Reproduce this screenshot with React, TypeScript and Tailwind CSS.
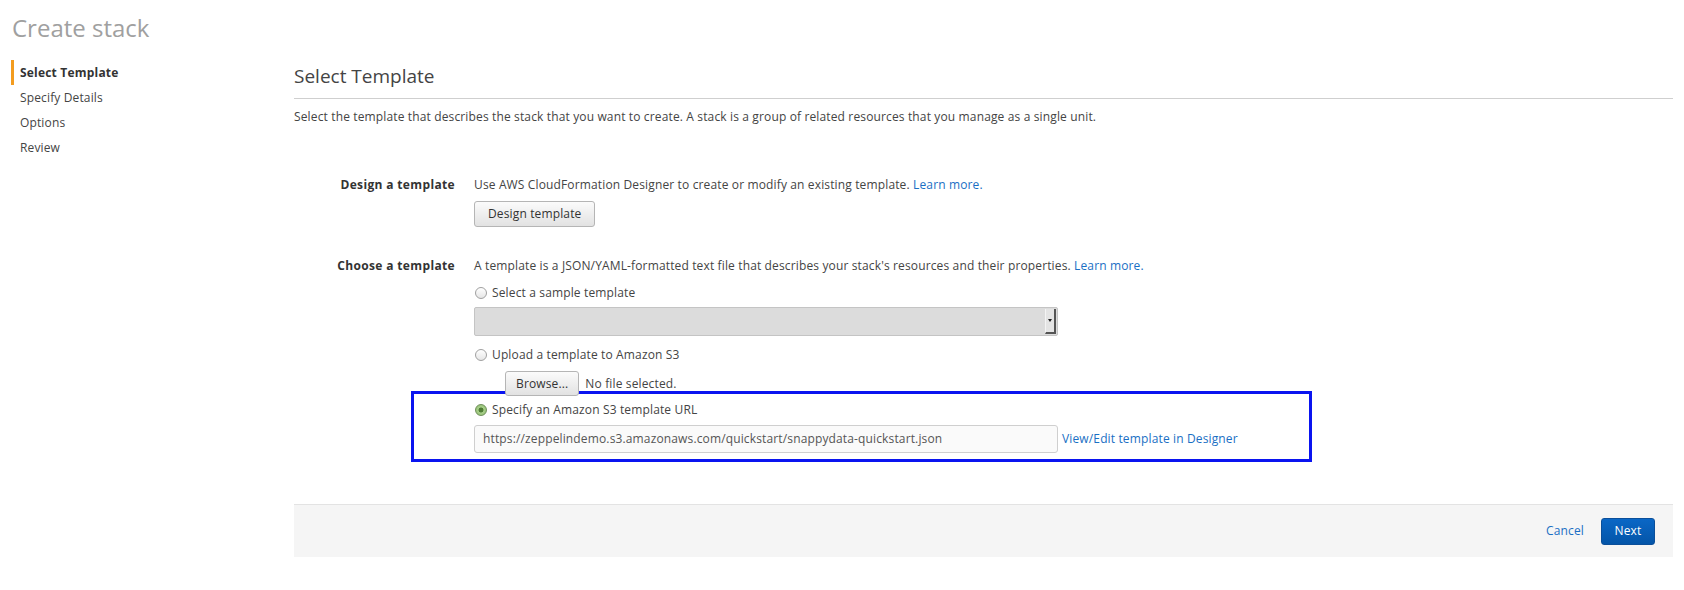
import React from "react";

function Radio({ checked }: { checked?: boolean }) {
  if (checked) {
    return (
      <span className="inline-flex items-center justify-center w-[12px] h-[12px] rounded-full border border-[#6f8f5a] bg-[radial-gradient(circle,#4f7d35_0%,#4f7d35_30%,#a8cf8a_40%,#8cbc6c_100%)]" />
    );
  }
  return (
    <span className="inline-block w-[12px] h-[12px] rounded-full border border-[#a0a0a0] bg-[linear-gradient(#ffffff,#e6e6e6)]" />
  );
}

export default function App() {
  return (
    <div className="w-[1684px] h-[590px] bg-white text-[#444] font-['Open_Sans',sans-serif] tracking-[0.14px] overflow-hidden">
      <h1 className="pl-[12px] pt-[12px] text-[24px] leading-[32px] tracking-normal text-[#a0a0a0] font-normal">
        Create stack
      </h1>
      <div className="flex mt-[16px]">
        <nav className="w-[294px] shrink-0 flex flex-col text-[12px] pl-[11px]">
          <div className="flex items-center h-[25px] border-l-[3px] border-[#f39c1f] pl-[6px] font-bold text-[#333] tracking-[0.2px]">
            Select Template
          </div>
          <div className="flex items-center h-[25px] pl-[9px]">Specify Details</div>
          <div className="flex items-center h-[25px] pl-[9px]">Options</div>
          <div className="flex items-center h-[25px] pl-[9px]">Review</div>
        </nav>
        <main className="flex-1 pr-[11px]">
          <h2 className="text-[19px] leading-[24px] tracking-normal text-[#444] font-normal mt-[4px] pb-[10px] border-b border-[#cfcfcf]">
            Select Template
          </h2>
          <p className="text-[12px] leading-[18px] mt-[9px]">
            Select the template that describes the stack that you want to create. A stack is a group of related resources that you manage as a single unit.
          </p>

          <div className="grid grid-cols-[161px_1fr] gap-x-[19px] mt-[50px] text-[12px]">
            <div className="text-right font-bold text-[#333] leading-[18px] tracking-[0.35px]">Design a template</div>
            <div className="flex flex-col items-start">
              <div className="leading-[18px]">
                Use AWS CloudFormation Designer to create or modify an existing template.{" "}
                <a className="text-[#1a6fc4]">Learn more.</a>
              </div>
              <button className="mt-[7px] h-[26px] px-[13px] rounded-[3px] border border-[#b5b5b5] bg-[linear-gradient(#fbfbfb,#e2e2e2)] text-[12px] text-[#333]">
                Design template
              </button>
            </div>

            <div className="text-right font-bold text-[#333] leading-[18px] tracking-[0.35px] mt-[30px]">Choose a template</div>
            <div className="flex flex-col items-start mt-[30px]">
              <div className="leading-[18px]">
                A template is a JSON/YAML-formatted text file that describes your stack's resources and their properties.{" "}
                <a className="text-[#1a6fc4]">Learn more.</a>
              </div>
              <div className="flex items-center gap-[5px] mt-[9px] leading-[18px] pl-[1px]">
                <Radio />
                <span>Select a sample template</span>
              </div>
              <div className="mt-[5px] w-[584px] h-[29px] flex items-stretch bg-[#dcdcdc] border border-[#c4c4c4] rounded-[2px] p-[1px]">
                <div className="flex-1" />
                <div className="w-[11px] flex items-center justify-center bg-[#e4e4e4] border-l border-[#f4f4f4] border-r-2 border-b-2 border-r-[#555] border-b-[#555]">
                  <span className="block w-0 h-0 border-l-[2px] border-r-[2px] border-t-[3px] border-l-transparent border-r-transparent border-t-[#222]" />
                </div>
              </div>
              <div className="flex items-center gap-[5px] mt-[10px] leading-[18px] pl-[1px]">
                <Radio />
                <span>Upload a template to Amazon S3</span>
              </div>
            </div>
          </div>

          <div className="flex items-center mt-[7px] ml-[211px] text-[12px]">
            <button className="h-[25px] px-[10px] rounded-[3px] border border-[#b5b5b5] bg-[linear-gradient(#fbfbfb,#e2e2e2)] text-[12px] text-[#333]">
              Browse...
            </button>
            <span className="ml-[6px]">No file selected.</span>
          </div>

          <div className="-mt-[5px] ml-[117px] w-[901px] h-[71px] border-[3px] border-[#0a14f0] text-[12px] pl-[60px] pt-[7px]">
            <div className="flex items-center gap-[5px] leading-[18px] pl-[1px]">
              <Radio checked />
              <span>Specify an Amazon S3 template URL</span>
            </div>
            <div className="flex items-center mt-[6px]">
              <div className="w-[584px] h-[28px] flex items-center px-[8px] rounded-[3px] border border-[#cfcfcf] bg-[#fafafa] text-[#555]">
                https://zeppelindemo.s3.amazonaws.com/quickstart/snappydata-quickstart.json
              </div>
              <a className="ml-[4px] text-[#1a6fc4]">View/Edit template in Designer</a>
            </div>
          </div>

          <div className="mt-[42px] h-[53px] bg-[#f5f5f5] border-t border-[#e3e3e3] flex items-center justify-end pr-[18px] gap-[17px] text-[12px]">
            <a className="text-[#1a6fc4]">Cancel</a>
            <button className="h-[27px] w-[54px] rounded-[3px] border border-[#0b4f9a] bg-[linear-gradient(#0a67c6,#0455a8)] text-white text-[12px]">
              Next
            </button>
          </div>
        </main>
      </div>
    </div>
  );
}
